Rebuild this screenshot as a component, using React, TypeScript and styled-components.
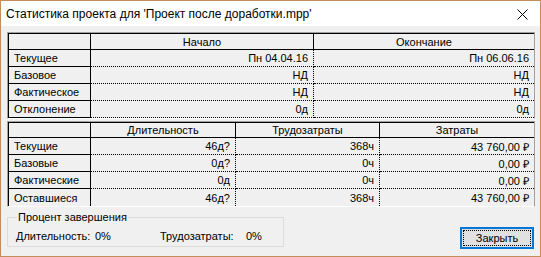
import styled, { createGlobalStyle } from "styled-components";

const GlobalStyle = createGlobalStyle`
  html, body {
    margin: 0;
    padding: 0;
    background: #ffffff;
  }
  body {
    font-family: "Liberation Sans", Arial, sans-serif;
    font-size: 11px;
    color: #000;
  }
  * {
    box-sizing: border-box;
  }
`;

const Window = styled.div`
  width: 541px;
  height: 257px;
  border: 1px solid #c28d5a;
  background: #f0f0f0;
  display: flex;
  flex-direction: column;
`;

const TitleBar = styled.div`
  height: 25px;
  flex: none;
  background: #ffffff;
  display: flex;
  align-items: center;
  justify-content: space-between;
  padding-left: 5px;
  padding-right: 12px;
`;

const Title = styled.span`
  font-size: 12px;
  white-space: nowrap;
`;

const CloseIcon = styled.svg`
  display: block;
  margin-top: 2px;
`;

const Body = styled.div`
  flex: 1;
  padding: 6px 5px 0 6px;
  display: flex;
  flex-direction: column;
  gap: 2px;
`;

const Frame = styled.div`
  border-top: 1px solid #a0a0a0;
  border-left: 1px solid #a0a0a0;
  border-right: 1px solid #a0a0a0;
  border-bottom: 1px solid #ffffff;
`;

const Grid = styled.div<{ $cols: string }>`
  display: grid;
  grid-template-columns: ${(p) => p.$cols};
  border-top: 1px solid #000;
  border-left: 1px solid #000;
`;

const HeadCell = styled.div<{ $h: number; $last?: boolean }>`
  height: ${(p) => p.$h}px;
  border-bottom: 1px solid #000;
  border-right: ${(p) => (p.$last ? "none" : "1px solid #000")};
  display: flex;
  align-items: center;
  justify-content: center;
  white-space: nowrap;
`;

const LabelCell = styled.div<{ $end?: boolean }>`
  height: 17px;
  border-bottom: ${(p) => (p.$end ? "none" : "1px solid #000")};
  border-right: 1px solid #000;
  display: flex;
  align-items: center;
  padding-left: 5px;
  white-space: nowrap;
`;

const ValueCell = styled.div<{ $end?: boolean; $last?: boolean }>`
  height: 17px;
  border-bottom: ${(p) => (p.$end ? "none" : "1px dotted #000")};
  border-right: ${(p) => (p.$last ? "none" : "1px dotted #000")};
  display: flex;
  align-items: center;
  justify-content: flex-end;
  padding-right: 5px;
  white-space: nowrap;
`;

const Bottom = styled.div`
  display: flex;
  justify-content: space-between;
  align-items: flex-start;
  margin-top: 1px;
`;

const GroupBox = styled.fieldset`
  width: 277px;
  height: 37px;
  margin: 0;
  padding: 5px 0 0 8px;
  border: 1px solid #dcdcdc;
`;

const Legend = styled.legend`
  padding: 0 1px;
  margin-left: 1px;
  line-height: 14px;
`;

const Stats = styled.div`
  display: grid;
  grid-template-columns: 79px 65px 86px auto;
  line-height: 14px;
`;

const CloseButton = styled.button`
  width: 74px;
  height: 22px;
  margin: 17px 1px 0 0;
  padding: 1px;
  border: 2px solid #0078d7;
  background: #e1e1e1;
  font: inherit;
  color: #000;
`;

const FocusRect = styled.span`
  display: flex;
  align-items: center;
  justify-content: center;
  height: 100%;
  border: 1px dotted #000;
`;

type Row = { label: string; values: string[] };

const dates: Row[] = [
  { label: "Текущее", values: ["Пн 04.04.16", "Пн 06.06.16"] },
  { label: "Базовое", values: ["НД", "НД"] },
  { label: "Фактическое", values: ["НД", "НД"] },
  { label: "Отклонение", values: ["0д", "0д"] },
];

const totals: Row[] = [
  { label: "Текущие", values: ["46д?", "368ч", "43 760,00 ₽"] },
  { label: "Базовые", values: ["0д?", "0ч", "0,00 ₽"] },
  { label: "Фактические", values: ["0д", "0ч", "0,00 ₽"] },
  { label: "Оставшиеся", values: ["46д?", "368ч", "43 760,00 ₽"] },
];

function StatsTable({
  cols,
  headers,
  rows,
  headH,
  openEnd,
}: {
  cols: string;
  headers: string[];
  rows: Row[];
  headH: number;
  openEnd?: boolean;
}) {
  return (
    <Frame>
      <Grid $cols={cols}>
        <HeadCell $h={headH} />
        {headers.map((h, i) => (
          <HeadCell key={h} $h={headH} $last={i === headers.length - 1}>
            {h}
          </HeadCell>
        ))}
        {rows.map((r, ri) => {
          const end = openEnd && ri === rows.length - 1;
          return [
            <LabelCell key={r.label} $end={end}>
              {r.label}
            </LabelCell>,
            ...r.values.map((v, i) => (
              <ValueCell key={r.label + i} $end={end} $last={i === r.values.length - 1}>
                {v}
              </ValueCell>
            )),
          ];
        })}
      </Grid>
    </Frame>
  );
}

export default function App() {
  return (
    <>
      <GlobalStyle />
      <Window>
        <TitleBar>
          <Title>Статистика проекта для 'Проект после доработки.mpp'</Title>
          <CloseIcon width="11" height="11" viewBox="0 0 11 11">
            <path d="M0.5 0.5 L10.5 10.5 M10.5 0.5 L0.5 10.5" stroke="#000" strokeWidth="1" />
          </CloseIcon>
        </TitleBar>
        <Body>
          <StatsTable cols="82px 223px 1fr" headers={["Начало", "Окончание"]} rows={dates} headH={16} />
          <StatsTable
            cols="82px 145px 144px 1fr"
            headers={["Длительность", "Трудозатраты", "Затраты"]}
            rows={totals}
            headH={15}
            openEnd
          />
          <Bottom>
            <GroupBox>
              <Legend>Процент завершения</Legend>
              <Stats>
                <span>Длительность:</span>
                <span>0%</span>
                <span>Трудозатраты:</span>
                <span>0%</span>
              </Stats>
            </GroupBox>
            <CloseButton>
              <FocusRect>Закрыть</FocusRect>
            </CloseButton>
          </Bottom>
        </Body>
      </Window>
    </>
  );
}
